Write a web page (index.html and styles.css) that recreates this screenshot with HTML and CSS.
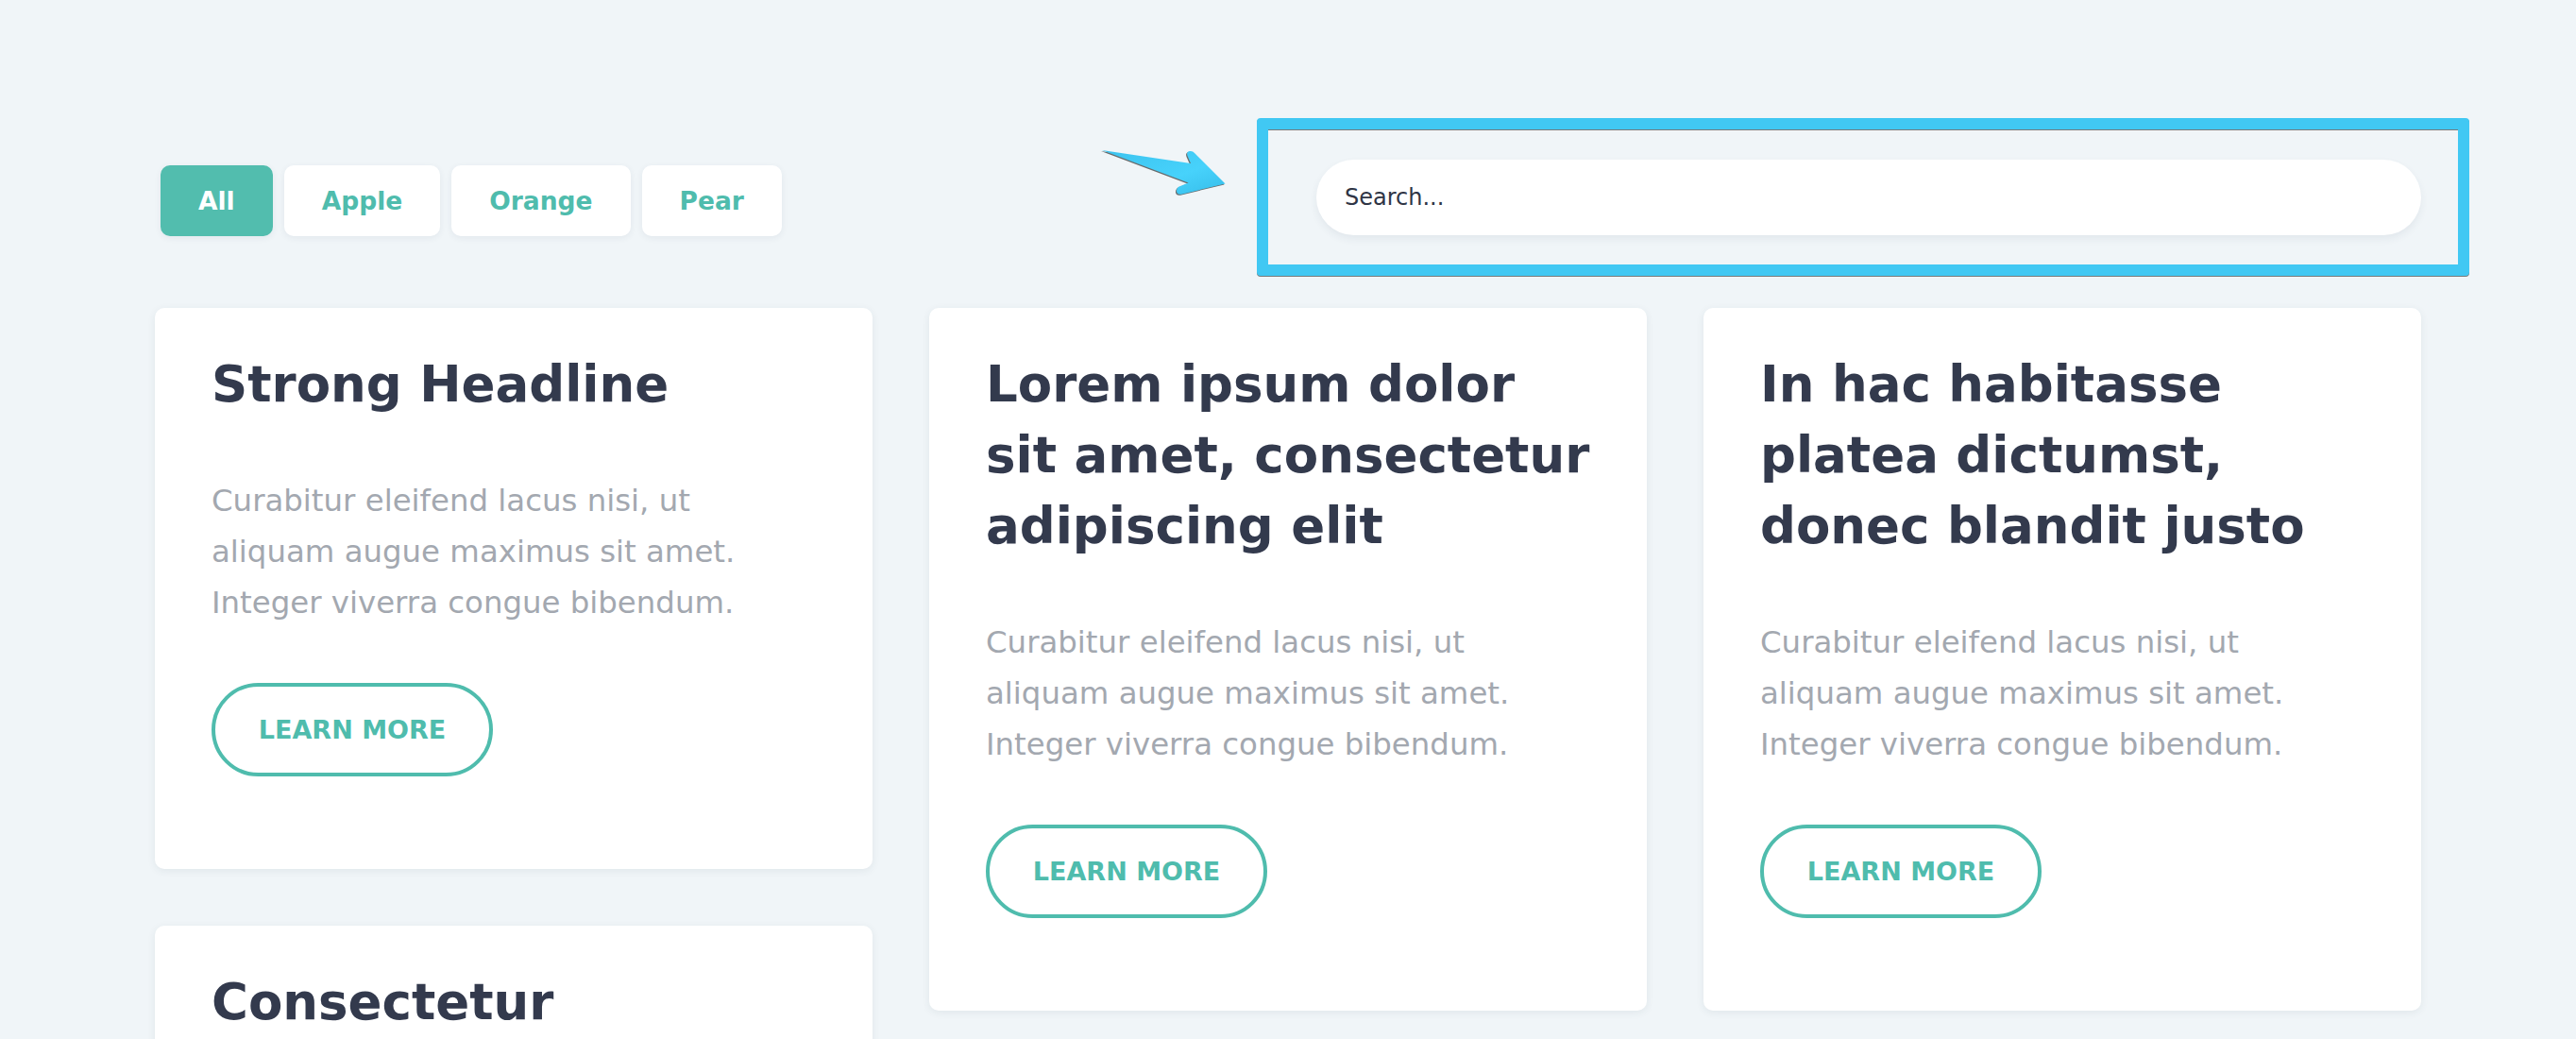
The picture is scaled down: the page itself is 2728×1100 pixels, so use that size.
FILE: index.html
```html
<!DOCTYPE html>
<html lang="en">
<head>
<meta charset="utf-8">
<title>Filter cards</title>
<link rel="stylesheet" href="styles.css">
</head>
<body>
<div class="page">
  <div class="toolbar">
    <div class="filters">
      <button class="filter active">All</button>
      <button class="filter">Apple</button>
      <button class="filter">Orange</button>
      <button class="filter">Pear</button>
    </div>
    <input class="search" type="text" placeholder="Search...">
    <svg class="arrow" viewBox="0 0 170 90" width="170" height="90" aria-hidden="true">
      <defs>
        <linearGradient id="ag" x1="0" y1="0" x2="1" y2="1">
          <stop offset="0" stop-color="#3cc3ef"/>
          <stop offset="0.6" stop-color="#47d2fb"/>
          <stop offset="1" stop-color="#36bdea"/>
        </linearGradient>
      </defs>
      <path d="M17,19 L111,33 L107.5,25 Q106,20.5 110,20 Q113,19.5 115,22 L147.5,54.5 L101,65.7 Q96.5,66.5 96,62.5 Q95.8,58.5 100,57 L108.5,53.5 Z" fill="url(#ag)"/>
    </svg>
    <div class="highlight"></div>
  </div>

  <div class="grid">
    <div class="column">
      <div class="card">
        <h2>Strong Headline</h2>
        <p>Curabitur eleifend lacus nisi, ut<br>aliquam augue maximus sit amet.<br>Integer viverra congue bibendum.</p>
        <a class="more" href="#">LEARN MORE</a>
      </div>
      <div class="card">
        <h2>Consectetur</h2>
        <p>Curabitur eleifend lacus nisi, ut<br>aliquam augue maximus sit amet.<br>Integer viverra congue bibendum.</p>
        <a class="more" href="#">LEARN MORE</a>
      </div>
    </div>
    <div class="column">
      <div class="card">
        <h2>Lorem ipsum dolor<br>sit amet, consectetur<br>adipiscing elit</h2>
        <p>Curabitur eleifend lacus nisi, ut<br>aliquam augue maximus sit amet.<br>Integer viverra congue bibendum.</p>
        <a class="more" href="#">LEARN MORE</a>
      </div>
    </div>
    <div class="column">
      <div class="card">
        <h2>In hac habitasse<br>platea dictumst,<br>donec blandit justo</h2>
        <p>Curabitur eleifend lacus nisi, ut<br>aliquam augue maximus sit amet.<br>Integer viverra congue bibendum.</p>
        <a class="more" href="#">LEARN MORE</a>
      </div>
    </div>
  </div>
</div>
</body>
</html>
```

FILE: styles.css
```css
* { box-sizing: border-box; }

html, body {
  margin: 0;
  padding: 0;
  background: #f0f5f8;
  font-family: "DejaVu Sans", "Liberation Sans", sans-serif;
}

.page {
  width: 2400px;
  margin: 0 auto;
}

.toolbar {
  position: relative;
  display: flex;
  justify-content: space-between;
  align-items: flex-start;
  padding-top: 169px;
  margin-bottom: 76px;
}

.filters {
  display: flex;
  margin-top: 6px;
}

.filter {
  height: 75px;
  margin: 0 6px;
  padding: 0 40px;
  border: none;
  border-radius: 10px;
  background: #ffffff;
  color: #4fbcad;
  font-family: "DejaVu Sans", sans-serif;
  font-weight: 700;
  font-size: 26.5px;
  box-shadow: 0 2px 7px rgba(40, 60, 80, 0.07);
  cursor: pointer;
}

.filter.active {
  background: #52bdae;
  color: #ffffff;
}

.search {
  width: 1170px;
  height: 80px;
  border: none;
  border-radius: 40px;
  background: #ffffff;
  padding: 0 30px;
  font-family: "DejaVu Sans", sans-serif;
  font-size: 24px;
  color: #2f3545;
  box-shadow: 0 4px 8px rgba(40, 60, 80, 0.07);
  outline: none;
}

.search::placeholder {
  color: #2f3545;
  opacity: 1;
}

.arrow {
  position: absolute;
  left: 986px;
  top: 140px;
  filter: drop-shadow(-0.8px 1.1px 0 rgba(60, 60, 60, 0.75));
}

.highlight {
  position: absolute;
  right: -51px;
  top: 125px;
  width: 1284px;
  height: 167px;
  border: 12px solid #41c8f3;
  border-radius: 4px;
  filter: drop-shadow(0.6px 1.6px 0 rgba(70, 70, 70, 0.7));
  pointer-events: none;
}

.grid {
  display: flex;
  gap: 60px;
  align-items: flex-start;
}

.column {
  flex: 0 0 760px;
  display: flex;
  flex-direction: column;
  gap: 60px;
}

.card {
  background: #ffffff;
  border-radius: 10px;
  padding: 43px 60px 98px;
  box-shadow: 0 2px 8px rgba(40, 60, 80, 0.08);
}

.card h2 {
  margin: 0;
  font-family: "DejaVu Sans", sans-serif;
  font-weight: 700;
  font-size: 53px;
  line-height: 75px;
  color: #333a4d;
  white-space: nowrap;
}

.card p {
  margin: 59px 0 0;
  font-family: "DejaVu Sans", sans-serif;
  font-size: 32.4px;
  line-height: 54px;
  color: #a3a8b0;
  white-space: nowrap;
}

.more {
  display: inline-flex;
  align-items: center;
  justify-content: center;
  margin-top: 58px;
  width: 298px;
  height: 99px;
  border: 4px solid #4fbcad;
  border-radius: 50px;
  color: #4fbcad;
  text-decoration: none;
  font-family: "DejaVu Sans", sans-serif;
  font-weight: 700;
  font-size: 27px;
}
```
